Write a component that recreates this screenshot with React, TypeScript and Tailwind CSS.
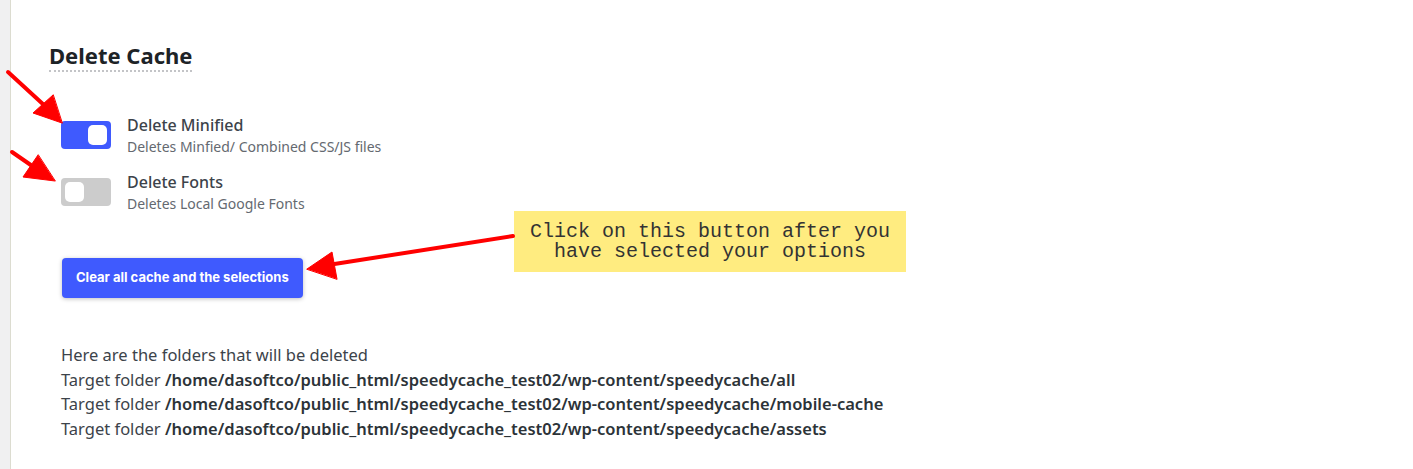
import React, { useState } from 'react'

const folders = [
  '/home/dasoftco/public_html/speedycache_test02/wp-content/speedycache/all',
  '/home/dasoftco/public_html/speedycache_test02/wp-content/speedycache/mobile-cache',
  '/home/dasoftco/public_html/speedycache_test02/wp-content/speedycache/assets',
]

function Toggle({ on, onClick }: { on: boolean; onClick: () => void }) {
  return (
    <button
      onClick={onClick}
      className={`flex h-[28px] w-[50px] shrink-0 items-center rounded-[4px] px-[4px] ${on ? 'justify-end bg-[#3f5afe]' : 'justify-start bg-[#cccccc]'}`}
    >
      <span className="block h-[20px] w-[19px] rounded-[5px] bg-white" />
    </button>
  )
}

function Arrows() {
  return (
    <svg className="pointer-events-none absolute left-0 top-0" width="1413" height="469">
      <g fill="#ff0000" stroke="#ff0000" strokeLinecap="round">
        <line x1="8" y1="72" x2="45" y2="106" strokeWidth="4" />
        <polygon points="62,123 33,113 53,95" strokeWidth="1" />
        <line x1="12" y1="152" x2="38" y2="170" strokeWidth="4" />
        <polygon points="55,181 23,177 38,155" strokeWidth="1" />
        <line x1="513" y1="236" x2="328" y2="265" strokeWidth="4" />
        <polygon points="307,269 332,252 337,279" strokeWidth="1" />
      </g>
    </svg>
  )
}

export default function App() {
  const [minified, setMinified] = useState(true)
  const [fonts, setFonts] = useState(false)

  const options = [
    { title: 'Delete Minified', desc: 'Deletes Minfied/ Combined CSS/JS files', on: minified, toggle: () => setMinified(!minified) },
    { title: 'Delete Fonts', desc: 'Deletes Local Google Fonts', on: fonts, toggle: () => setFonts(!fonts) },
  ]

  return (
    <div className="relative flex h-[469px] w-[1413px] overflow-hidden bg-white font-['Noto_Sans','Open_Sans',sans-serif] text-[#3c434a]">
      <div className="w-[11px] shrink-0 border-r border-[#dcdcd0] bg-[#f0f0f1]" />

      <div className="flex flex-col pl-[38px] pt-[41px]">
        <h2 className="self-start border-b-2 border-dotted border-[#c3c4c7] pb-[1px] text-[22px] font-bold leading-[28px] text-[#1d2327]">
          Delete Cache
        </h2>

        <div className="ml-[12px] mt-[49px] flex flex-col gap-[22px]">
          {options.map((o) => (
            <div key={o.title} className="flex items-start gap-[16px]">
              <Toggle on={o.on} onClick={o.toggle} />
              <div className="-mt-[6px] flex flex-col">
                <span className="text-[16px] font-medium leading-[20px] text-[#3c434a]">{o.title}</span>
                <span className="mt-[3px] text-[14px] leading-[18px] text-[#646970]">{o.desc}</span>
              </div>
            </div>
          ))}
        </div>

        <button className="ml-[13px] mt-[45px] h-[40px] self-start rounded-[4px] bg-[#3f5afe] px-[14px] font-['Inter',sans-serif] text-[13px] font-bold text-white shadow-[0_1px_4px_rgba(0,0,0,0.25)]">
          Clear all cache and the selections
        </button>

        <div className="ml-[12px] mt-[45px] text-[16.5px] leading-[24.7px] text-[#3c434a]">
          <div>Here are the folders that will be deleted</div>
          {folders.map((f) => (
            <div key={f}>
              Target folder <span className="font-semibold text-[#2c3338]">{f}</span>
            </div>
          ))}
        </div>
      </div>

      <div className="absolute left-[514px] top-[211px] flex h-[61px] w-[392px] items-center justify-center bg-[#ffec80] text-center font-['Liberation_Mono',monospace] text-[20px] leading-[20px] text-[#333]">
        Click on this button after you
        <br />
        have selected your options
      </div>

      <Arrows />
    </div>
  )
}
